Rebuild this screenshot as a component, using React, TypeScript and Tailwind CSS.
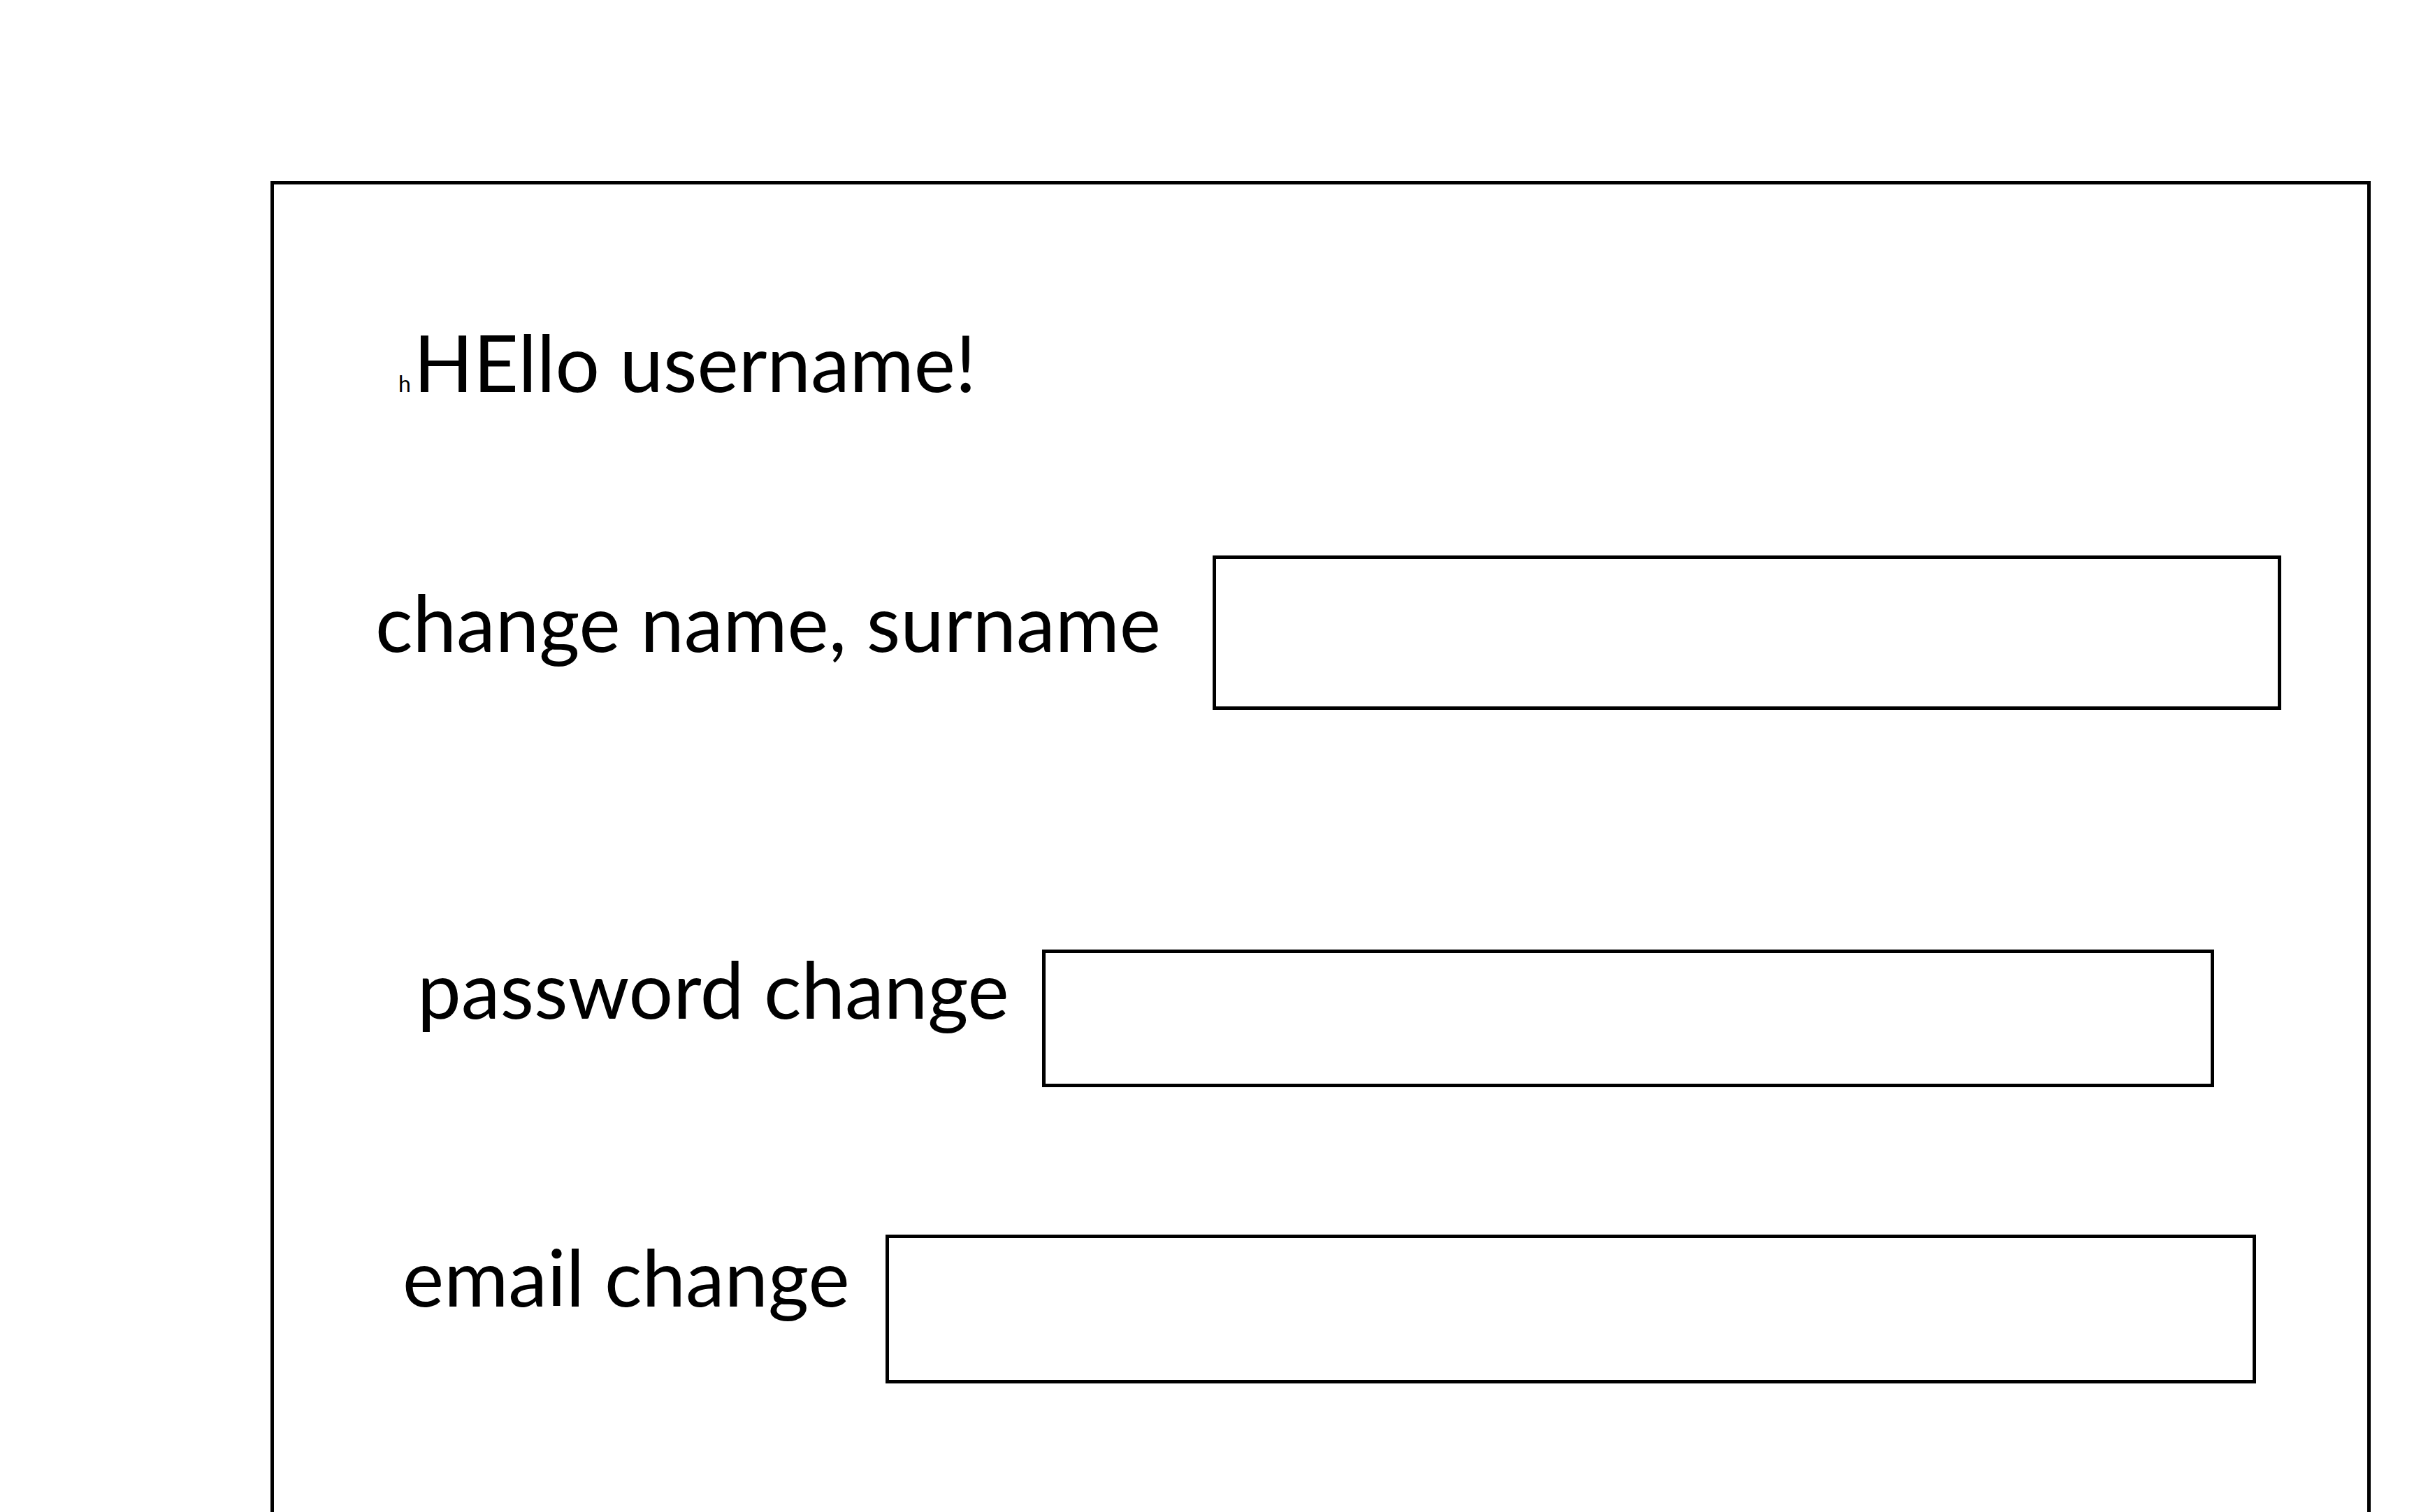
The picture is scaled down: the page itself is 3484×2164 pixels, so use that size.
export default function App() {
  const font = { fontFamily: "Lato, 'Open Sans', sans-serif" };
  return (
    <div className="h-[2164px] w-full overflow-hidden bg-white text-black" style={font}>
      <div className="ml-[387px] mt-[259px] h-[2000px] w-[3005px] border-[5px] border-black">
        <div className="mt-[198px] flex items-baseline pl-[178px] leading-none">
          <span className="text-[32px]">h</span>
          <span className="ml-[4px] text-[112px]">HEllo username!</span>
        </div>

        <div className="mt-[221px] flex items-start pl-[145px]">
          <div className="mt-[39px] w-[1198px] shrink-0 text-[112px] leading-none whitespace-nowrap">
            change name, surname
          </div>
          <div className="h-[221px] w-[1529px] shrink-0 border-[5px] border-black" />
        </div>

        <div className="mt-[343px] flex items-start pl-[205px]">
          <div className="mt-[0px] w-[894px] shrink-0 text-[112px] leading-none whitespace-nowrap">
            password change
          </div>
          <div className="h-[197px] w-[1677px] shrink-0 border-[5px] border-black" />
        </div>

        <div className="mt-[211px] flex items-start pl-[184px]">
          <div className="mt-[4px] w-[691px] shrink-0 text-[112px] leading-none whitespace-nowrap">
            email change
          </div>
          <div className="h-[213px] w-[1961px] shrink-0 border-[5px] border-black" />
        </div>
      </div>
    </div>
  );
}
